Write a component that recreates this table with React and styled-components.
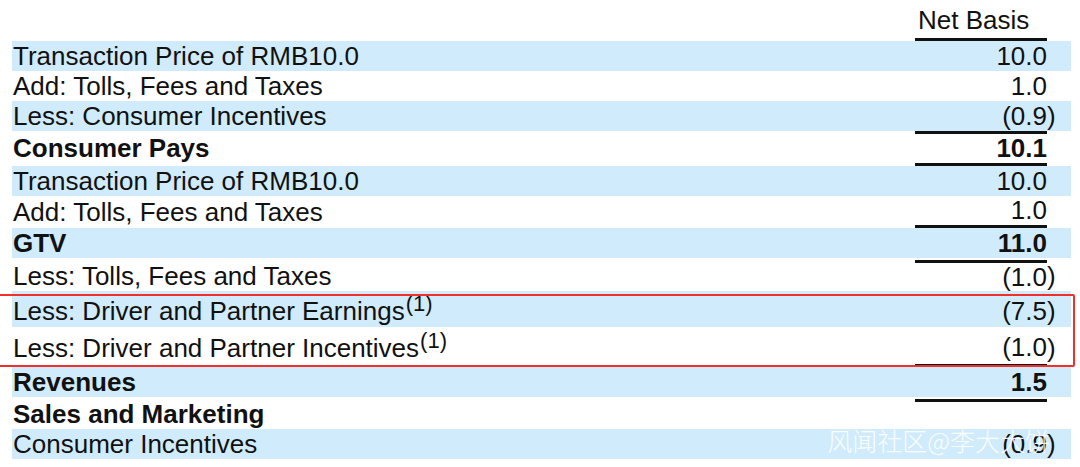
import React from "react";
import styled, { createGlobalStyle, css } from "styled-components";

const GlobalStyle = createGlobalStyle`
  body {
    margin: 0;
    background: #fff;
    font-family: "Liberation Sans", Arial, sans-serif;
  }
`;

const BAND = "#d0ebfc";
const RULE = "3px solid #111";

const Page = styled.div`
  position: relative;
  width: 1080px;
  height: 467px;
  overflow: hidden;
  font-size: 26px;
  color: #111;
`;

const Grid = styled.div`
  display: grid;
  grid-template-columns: 1fr 132px 24px;
  margin-left: 12px;
  width: 1059px;
  box-sizing: border-box;
  height: ${({ h }) => h}px;
  padding-top: ${({ shift }) => shift || 0}px;
  background: ${({ band }) => (band ? BAND : "transparent")};
  font-weight: ${({ bold }) => (bold ? 700 : 400)};
  line-height: 29px;
`;

const Label = styled.div`
  display: flex;
  align-items: center;
  padding-left: 1px;
  white-space: nowrap;
`;

const Value = styled.div`
  display: flex;
  align-items: center;
  justify-content: flex-end;
  box-sizing: border-box;
  ${({ top }) => top && css`border-top: ${RULE};`}
  ${({ bottom }) => bottom && css`border-bottom: ${RULE};`}
`;

const Paren = styled.div`
  display: flex;
  align-items: center;
`;

const Head = styled(Value)`
  justify-content: flex-start;
  align-items: flex-end;
  padding: 0 0 3px 3px;
  border-bottom: ${RULE};
`;

const Note = styled.sup`
  font-size: 22px;
  line-height: 0;
  vertical-align: 9px;
  margin-left: 1px;
`;

const Highlight = styled.div`
  position: relative;
  &::after {
    content: "";
    position: absolute;
    left: -8px;
    right: 5px;
    top: 3px;
    bottom: 0;
    border: 2px solid #f2302b;
    border-radius: 2px;
    pointer-events: none;
  }
`;

const Watermark = styled.div`
  position: absolute;
  right: 30px;
  top: 428px;
  font-family: "Noto Sans CJK SC", sans-serif;
  font-weight: 300;
  font-size: 25px;
  line-height: 1;
  color: rgba(255, 255, 255, 0.92);
  white-space: nowrap;
`;

const Row = ({ label, value, neg, note, ...rest }) => (
  <Grid {...rest}>
    <Label>
      <span>
        {label}
        {note && <Note>(1)</Note>}
      </span>
    </Label>
    <Value top={rest.top} bottom={rest.bottom}>
      {value !== undefined && (neg ? `(${value}` : value)}
    </Value>
    <Paren>{neg ? ")" : ""}</Paren>
  </Grid>
);

const rows = [
  { label: "Transaction Price of RMB10.0", value: "10.0", band: true, h: 30 },
  { label: "Add: Tolls, Fees and Taxes", value: "1.0", h: 30 },
  { label: "Less: Consumer Incentives", value: "0.9", neg: true, band: true, h: 30 },
  { label: "Consumer Pays", value: "10.1", bold: true, h: 35, top: true, bottom: true },
  { label: "Transaction Price of RMB10.0", value: "10.0", band: true, h: 30 },
  { label: "Add: Tolls, Fees and Taxes", value: "1.0", h: 32, bottom: true },
  { label: "GTV", value: "11.0", bold: true, band: true, h: 30 },
  { label: "Less: Tolls, Fees and Taxes", value: "1.0", neg: true, h: 33, shift: 2, top: true },
];

const flagged = [
  { label: "Less: Driver and Partner Earnings", value: "7.5", neg: true, note: true, band: true, h: 36, shift: 4 },
  { label: "Less: Driver and Partner Incentives", value: "1.0", neg: true, note: true, h: 40, shift: 3, bottom: true },
];

const tail = [
  { label: "Revenues", value: "1.5", bold: true, band: true, h: 30, shift: 1 },
  { label: "Sales and Marketing", bold: true, h: 32, shift: 2, top: true },
  { label: "Consumer Incentives", value: "0.9", neg: true, band: true, h: 30 },
];

export default function App() {
  return (
    <Page>
      <GlobalStyle />
      <Grid h={41}>
        <Label />
        <Head>Net Basis</Head>
        <Paren />
      </Grid>
      {rows.map((r, i) => (
        <Row key={`a${i}`} {...r} />
      ))}
      <Highlight>
        {flagged.map((r, i) => (
          <Row key={`b${i}`} {...r} />
        ))}
      </Highlight>
      {tail.map((r, i) => (
        <Row key={`c${i}`} {...r} />
      ))}
      <Watermark>风闻社区@李大大饼</Watermark>
    </Page>
  );
}
